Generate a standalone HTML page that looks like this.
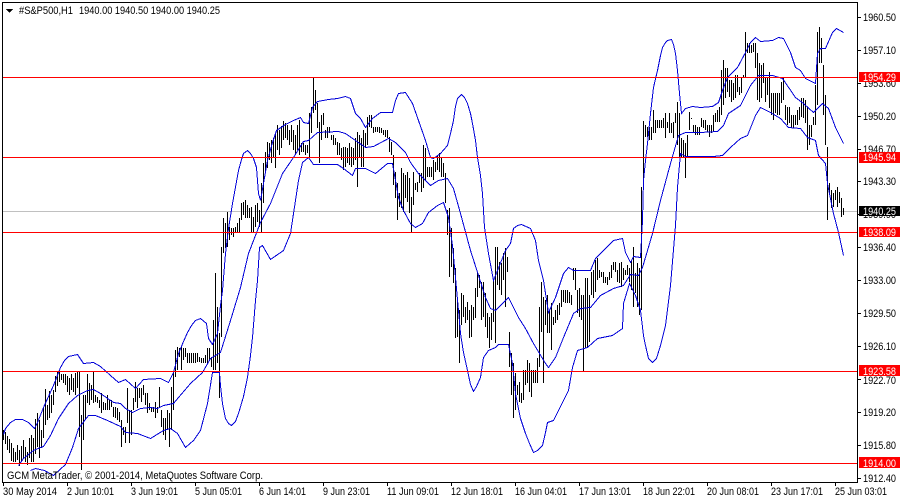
<!DOCTYPE html>
<html><head><meta charset="utf-8"><style>
html,body{margin:0;padding:0;background:#fff;width:900px;height:500px;overflow:hidden}
svg{display:block}
text{font-family:"Liberation Sans",sans-serif;font-size:11px;fill:#000}
text.w{fill:#fff}
</style></head><body>
<svg width="900" height="500" viewBox="0 0 900 500" xmlns="http://www.w3.org/2000/svg">
<rect width="900" height="500" fill="#fff"/>
<g shape-rendering="crispEdges">
<rect x="3" y="211" width="854" height="1" fill="#c0c0c0"/>
<path fill="none" stroke="#000" stroke-width="1" transform="translate(.5 0)" d="M3 430V440M5 432V444M7 436V450M9 439V453M11 443V461M13 448V462M15 452V462M17 445V460M19 450V466M21 446V462M23 440V458M25 447V462M27 452V465M29 438V458M31 435V462M33 438V462M35 419V454M37 413V447M39 420V458M41 430V448M43 407V438M45 389V425M47 405V420M49 391V418M51 395V413M53 390V405M55 376V392M57 372V386M59 372V382M61 374V380M63 374V383M65 374V385M67 376V392M69 378V395M71 374V390M73 378V392M75 373V395M77 372V388M79 371V437M81 415V470M83 395V440M85 395V420M87 374V403M89 383V405M91 385V400M93 371V403M95 395V402M97 397V403M99 400V408M101 393V413M103 402V410M105 403V410M107 395V410M109 400V410M111 400V407M113 407V417M115 407V418M117 408V420M119 412V422M121 420V447M123 427V435M125 427V443M127 388V423M129 410V443M131 410V435M133 398V410M135 382V402M137 388V408M139 388V398M141 388V402M143 385V395M145 393V405M147 393V413M149 403V410M151 407V412M153 407V412M155 402V418M157 407V413M159 387V408M161 410V427M163 418V435M165 418V440M167 410V430M169 413V447M171 387V430M173 372V410M175 350V377M177 347V370M179 348V357M181 347V370M183 348V360M185 348V357M187 353V363M189 353V363M191 353V363M193 353V363M195 353V363M197 353V362M199 357V362M201 358V363M203 358V363M205 355V363M207 348V363M209 348V360M211 357V367M213 320V370M215 273V370M217 307V363M219 333V398M221 247V337M223 218V253M225 223V248M227 212V247M229 227V240M231 228V235M233 228V237M235 227V233M237 223V233M239 218V233M241 203V220M243 202V215M245 200V218M247 205V218M249 208V218M251 207V233M253 217V233M255 205V227M257 203V222M259 210V227M261 183V232M263 163V203M265 152V173M267 142V168M269 143V160M271 140V163M273 138V158M275 133V168M277 125V150M279 130V155M281 126V148M283 121V140M285 123V138M287 125V140M289 130V145M291 125V142M293 130V150M295 135V155M297 125V150M299 120V155M301 143V152M303 143V152M305 145V155M307 145V153M309 113V158M311 107V133M313 77V113M315 90V110M317 103V128M319 122V163M321 115V140M323 113V125M325 130V138M327 127V138M329 127V133M331 135V140M333 135V145M335 138V145M337 142V155M339 143V155M341 148V160M343 147V170M345 147V167M347 148V163M349 143V165M351 147V167M353 148V165M355 138V160M357 132V187M359 135V158M361 138V167M363 130V167M365 133V147M367 117V145M369 115V127M371 115V128M373 127V133M375 127V132M377 127V132M379 127V133M381 128V133M383 130V135M385 130V137M387 130V138M389 137V152M391 142V155M393 155V185M395 172V198M397 183V220M399 193V207M401 168V208M403 173V212M405 175V198M407 172V202M409 178V213M411 197V232M413 172V205M415 183V190M417 182V192M419 173V183M421 173V192M423 145V188M425 148V180M427 167V177M429 167V177M431 167V177M433 160V180M435 162V172M437 155V170M439 153V172M441 158V177M443 163V177M445 173V203M447 210V235M449 208V277M451 228V267M453 248V283M455 268V338M457 297V337M459 310V363M461 293V325M463 295V317M465 307V323M467 302V320M469 310V338M471 305V337M473 307V320M475 288V318M477 273V297M479 275V288M481 282V320M483 282V317M485 293V327M487 313V338M489 317V348M491 313V340M493 280V322M495 247V343M497 247V285M499 262V290M501 263V295M503 253V280M505 248V307M507 257V272M509 332V367M511 353V395M513 363V418M515 373V410M517 385V395M519 382V402M521 393V403M523 370V400M525 370V385M527 360V383M529 363V392M531 370V397M533 370V383M535 370V383M537 358V383M539 307V367M541 282V332M543 297V383M545 300V325M547 295V333M549 310V333M551 303V350M553 317V325M555 310V323M557 305V320M559 303V315M561 290V307M563 290V302M565 290V303M567 290V303M569 292V303M571 295V305M573 268V280M575 268V290M577 290V313M579 288V317M581 295V320M583 295V372M585 278V348M587 278V347M589 295V342M591 272V295M593 270V298M595 260V292M597 258V280M599 270V278M601 272V277M603 272V283M605 277V283M607 277V285M609 272V280M611 265V278M613 262V270M615 262V272M617 270V282M619 263V283M621 262V287M623 268V280M625 270V275M627 265V275M629 268V282M631 260V290M633 247V307M635 273V293M637 263V307M639 268V315M641 187V310M643 121V183M645 125V137M647 127V137M649 127V140M651 127V140M653 110V133M655 120V133M657 120V128M659 120V128M661 120V128M663 118V128M665 113V138M667 122V128M669 113V133M671 123V133M673 122V138M675 113V123M677 102V145M679 113V157M681 138V157M683 140V158M685 143V178M687 135V157M689 112V130M691 118V119M693 125V132M695 125V135M697 127V135M699 127V135M701 118V127M703 120V128M705 120V130M707 125V132M709 125V137M711 125V133M713 115V132M715 113V122M717 110V122M719 107V122M721 70V115M723 60V105M725 68V98M727 68V92M729 80V97M731 80V102M733 83V100M735 75V98M737 75V92M739 87V95M741 77V93M743 75V78M745 32V77M747 43V53M749 43V53M751 45V53M753 43V52M755 43V68M757 53V100M759 63V102M761 65V98M763 63V83M765 78V102M767 78V95M769 72V108M771 93V115M773 93V120M775 93V113M777 93V115M779 93V115M781 82V103M783 77V100M785 105V120M787 107V125M789 107V123M791 115V128M793 115V128M795 115V125M797 110V125M799 107V120M801 98V117M803 98V118M805 100V123M807 107V150M809 125V145M811 125V137M813 117V125M815 85V125M817 32V105M819 27V63M821 38V63M823 65V115M825 95V145M827 147V220M829 183V193M831 190V208M833 193V207M835 190V200M837 187V207M839 192V203M841 198V217M843 208V215"/>
<g fill="none" stroke="#0000d8" stroke-width="1" transform="translate(.5 .5)">
<polyline points="3,434 5,428 10,422 15,419 22,419 28,422 34,428 37,422 43,407 53,385 60,367 64,360 68,356 77,354 83,363 93,362 100,366 110,375 118,382 125,379 135,388 143,379 160,378 168,382 173,372 178,353 183,341 187,332 191,325 195,320 200,318 206,323 208,338 212,344 217,333 220,305 222,290 225,253 228,228 232,203 238,170 241,159 243,153 247,150 250,153 253,158 256,167 258,193 260,200 263,183 267,160 272,142 276,130 285,124 293,120 300,117 303,122 308,123 312,107 317,101 328,99 337,98 345,96 350,98 355,113 360,118 365,127 372,118 380,112 392,112 395,100 398,93 405,92 412,103 418,120 425,140 430,157 433,158 440,153 447,145 450,133 453,120 455,106 457,98 461,94 464,97 467,103 470,113 472,123 475,140 477,157 480,175 482,193 484,227 488,253 493,280 497,270 505,250 510,243 513,228 517,225 521,224 530,228 535,240 538,260 543,280 548,312 555,297 563,273 568,267 573,270 590,270 595,258 602,251 613,240 622,238 625,252 630,262 633,256 640,257 642,220 643,180 645,160 647,143 650,113 653,87 657,70 660,55 662,47 665,42 667,40 671,39 673,44 675,53 677,70 679,93 681,113 685,108 692,106 700,107 712,106 718,102 722,90 727,77 737,67 745,52 750,42 755,37 760,41 772,40 778,37 783,38 790,52 795,67 800,70 805,78 815,83 817,53 820,48 825,48 832,32 836,28 843,32"/>
<polyline points="18,465 23,458 33,450 40,447 43,446 50,435 58,418 68,403 77,395 87,390 93,389 100,393 113,402 120,403 125,408 132,412 140,408 150,407 157,408 163,405 173,403 178,397 190,383 202,372 210,358 220,352 230,320 240,287 248,253 260,222 270,203 282,173 293,157 303,141 308,140 317,132 338,131 345,133 355,140 365,147 373,146 388,138 395,142 405,152 410,162 418,173 430,185 438,180 447,178 453,188 460,213 470,250 478,275 485,297 490,308 495,310 508,297 513,307 518,317 525,328 533,343 545,363 548,367 555,357 563,337 573,313 580,308 590,307 600,295 613,288 623,285 630,274 638,275 642,267 652,233 660,200 670,163 678,135 685,132 700,132 717,131 723,125 728,113 740,105 750,85 758,75 772,75 782,78 795,97 803,103 813,112 822,103 828,108 835,127 843,143"/>
<polyline points="30,470 35,468 44,470 53,475 65,464 72,447 78,428 88,415 95,415 107,420 120,426 125,432 137,433 150,438 163,430 170,428 177,433 185,447 193,440 200,430 207,403 212,372 219,372 220,385 222,403 225,418 228,423 231,425 235,421 238,413 243,396 247,377 250,355 252,337 255,300 257,280 259,247 262,245 270,259 283,250 290,233 298,180 302,162 308,157 313,164 337,164 343,168 352,175 355,168 365,168 375,173 387,163 392,163 398,197 403,210 410,223 415,227 422,223 428,212 437,205 443,202 448,217 452,245 455,277 458,310 460,333 463,352 467,370 470,384 473,391 476,386 480,377 483,357 488,350 495,347 498,344 508,344 512,363 515,393 520,418 525,433 529,443 533,452 537,450 542,445 545,432 547,422 553,420 558,410 568,390 572,367 577,350 587,347 597,338 612,335 622,328 623,303 629,283 635,295 640,310 643,335 645,345 648,358 652,362 656,358 660,345 665,325 670,285 675,225 677,187 680,153 685,156 713,156 722,155 730,147 740,138 747,135 755,115 760,107 770,112 780,118 788,127 800,128 807,137 815,140 818,155 825,163 827,183 833,213 838,232 843,255"/>
</g>
<g fill="#f00">
<rect x="3" y="77" width="854" height="1"/>
<rect x="3" y="157" width="854" height="1"/>
<rect x="3" y="232" width="854" height="1"/>
<rect x="3" y="371" width="854" height="1"/>
<rect x="3" y="463" width="854" height="1"/>
</g>
<g fill="#000">
<rect x="2" y="2" width="856" height="1"/>
<rect x="2" y="2" width="1" height="481"/>
<rect x="2" y="482" width="856" height="1"/>
<rect x="857" y="2" width="1" height="481"/>
<rect x="858" y="17" width="3" height="1"/><rect x="858" y="50" width="3" height="1"/><rect x="858" y="83" width="3" height="1"/><rect x="858" y="116" width="3" height="1"/><rect x="858" y="149" width="3" height="1"/><rect x="858" y="181" width="3" height="1"/><rect x="858" y="214" width="3" height="1"/><rect x="858" y="247" width="3" height="1"/><rect x="858" y="280" width="3" height="1"/><rect x="858" y="313" width="3" height="1"/><rect x="858" y="346" width="3" height="1"/><rect x="858" y="379" width="3" height="1"/><rect x="858" y="412" width="3" height="1"/><rect x="858" y="445" width="3" height="1"/><rect x="858" y="478" width="3" height="1"/>
<rect x="3" y="483" width="1" height="3"/><rect x="67" y="483" width="1" height="3"/><rect x="131" y="483" width="1" height="3"/><rect x="195" y="483" width="1" height="3"/><rect x="259" y="483" width="1" height="3"/><rect x="323" y="483" width="1" height="3"/><rect x="387" y="483" width="1" height="3"/><rect x="451" y="483" width="1" height="3"/><rect x="515" y="483" width="1" height="3"/><rect x="579" y="483" width="1" height="3"/><rect x="643" y="483" width="1" height="3"/><rect x="707" y="483" width="1" height="3"/><rect x="771" y="483" width="1" height="3"/><rect x="835" y="483" width="1" height="3"/>
</g>
<polygon points="6,9 13,9 9.5,13" fill="#000"/>
</g>
<g>
<text x="19" y="14" textLength="54" lengthAdjust="spacingAndGlyphs">#S&amp;P500,H1</text>
<text x="79" y="14" textLength="141" lengthAdjust="spacingAndGlyphs">1940.00 1940.50 1940.00 1940.25</text>
<text x="7" y="479" textLength="256" lengthAdjust="spacingAndGlyphs">GCM MetaTrader, © 2001-2014, MetaQuotes Software Corp.</text>
<text x="863" y="21" textLength="33" lengthAdjust="spacingAndGlyphs">1960.50</text>
<text x="863" y="54" textLength="33" lengthAdjust="spacingAndGlyphs">1957.10</text>
<text x="863" y="87" textLength="33" lengthAdjust="spacingAndGlyphs">1953.60</text>
<text x="863" y="120" textLength="33" lengthAdjust="spacingAndGlyphs">1950.20</text>
<text x="863" y="153" textLength="33" lengthAdjust="spacingAndGlyphs">1946.70</text>
<text x="863" y="185" textLength="33" lengthAdjust="spacingAndGlyphs">1943.30</text>
<text x="863" y="218" textLength="33" lengthAdjust="spacingAndGlyphs">1939.90</text>
<text x="863" y="251" textLength="33" lengthAdjust="spacingAndGlyphs">1936.40</text>
<text x="863" y="284" textLength="33" lengthAdjust="spacingAndGlyphs">1933.00</text>
<text x="863" y="317" textLength="33" lengthAdjust="spacingAndGlyphs">1929.50</text>
<text x="863" y="350" textLength="33" lengthAdjust="spacingAndGlyphs">1926.10</text>
<text x="863" y="384" textLength="33" lengthAdjust="spacingAndGlyphs">1922.70</text>
<text x="863" y="416" textLength="33" lengthAdjust="spacingAndGlyphs">1919.20</text>
<text x="863" y="449" textLength="33" lengthAdjust="spacingAndGlyphs">1915.80</text>
<text x="863" y="482" textLength="33" lengthAdjust="spacingAndGlyphs">1912.40</text>
<rect x="859" y="72" width="41" height="10" fill="#f00"/>
<rect x="859" y="152" width="41" height="11" fill="#f00"/>
<rect x="859" y="206" width="41" height="10" fill="#000"/>
<rect x="859" y="227" width="41" height="10" fill="#f00"/>
<rect x="859" y="365" width="41" height="11" fill="#f00"/>
<rect x="859" y="457" width="41" height="11" fill="#f00"/>
<text class="w" x="863" y="81" textLength="33" lengthAdjust="spacingAndGlyphs">1954.29</text>
<text class="w" x="863" y="161" textLength="33" lengthAdjust="spacingAndGlyphs">1945.94</text>
<text class="w" x="863" y="215" textLength="33" lengthAdjust="spacingAndGlyphs">1940.25</text>
<text class="w" x="863" y="236" textLength="33" lengthAdjust="spacingAndGlyphs">1938.09</text>
<text class="w" x="863" y="375" textLength="33" lengthAdjust="spacingAndGlyphs">1923.58</text>
<text class="w" x="863" y="467" textLength="33" lengthAdjust="spacingAndGlyphs">1914.00</text>
<text x="3" y="495" textLength="54" lengthAdjust="spacingAndGlyphs">30 May 2014</text>
<text x="67" y="495" textLength="47" lengthAdjust="spacingAndGlyphs">2 Jun 10:01</text>
<text x="131" y="495" textLength="47" lengthAdjust="spacingAndGlyphs">3 Jun 19:01</text>
<text x="195" y="495" textLength="47" lengthAdjust="spacingAndGlyphs">5 Jun 05:01</text>
<text x="259" y="495" textLength="47" lengthAdjust="spacingAndGlyphs">6 Jun 14:01</text>
<text x="323" y="495" textLength="47" lengthAdjust="spacingAndGlyphs">9 Jun 23:01</text>
<text x="387" y="495" textLength="52" lengthAdjust="spacingAndGlyphs">11 Jun 09:01</text>
<text x="451" y="495" textLength="52" lengthAdjust="spacingAndGlyphs">12 Jun 18:01</text>
<text x="515" y="495" textLength="52" lengthAdjust="spacingAndGlyphs">16 Jun 04:01</text>
<text x="579" y="495" textLength="52" lengthAdjust="spacingAndGlyphs">17 Jun 13:01</text>
<text x="643" y="495" textLength="52" lengthAdjust="spacingAndGlyphs">18 Jun 22:01</text>
<text x="707" y="495" textLength="52" lengthAdjust="spacingAndGlyphs">20 Jun 08:01</text>
<text x="771" y="495" textLength="52" lengthAdjust="spacingAndGlyphs">23 Jun 17:01</text>
<text x="835" y="495" textLength="52" lengthAdjust="spacingAndGlyphs">25 Jun 03:01</text>
</g>
</svg>
</body></html>
